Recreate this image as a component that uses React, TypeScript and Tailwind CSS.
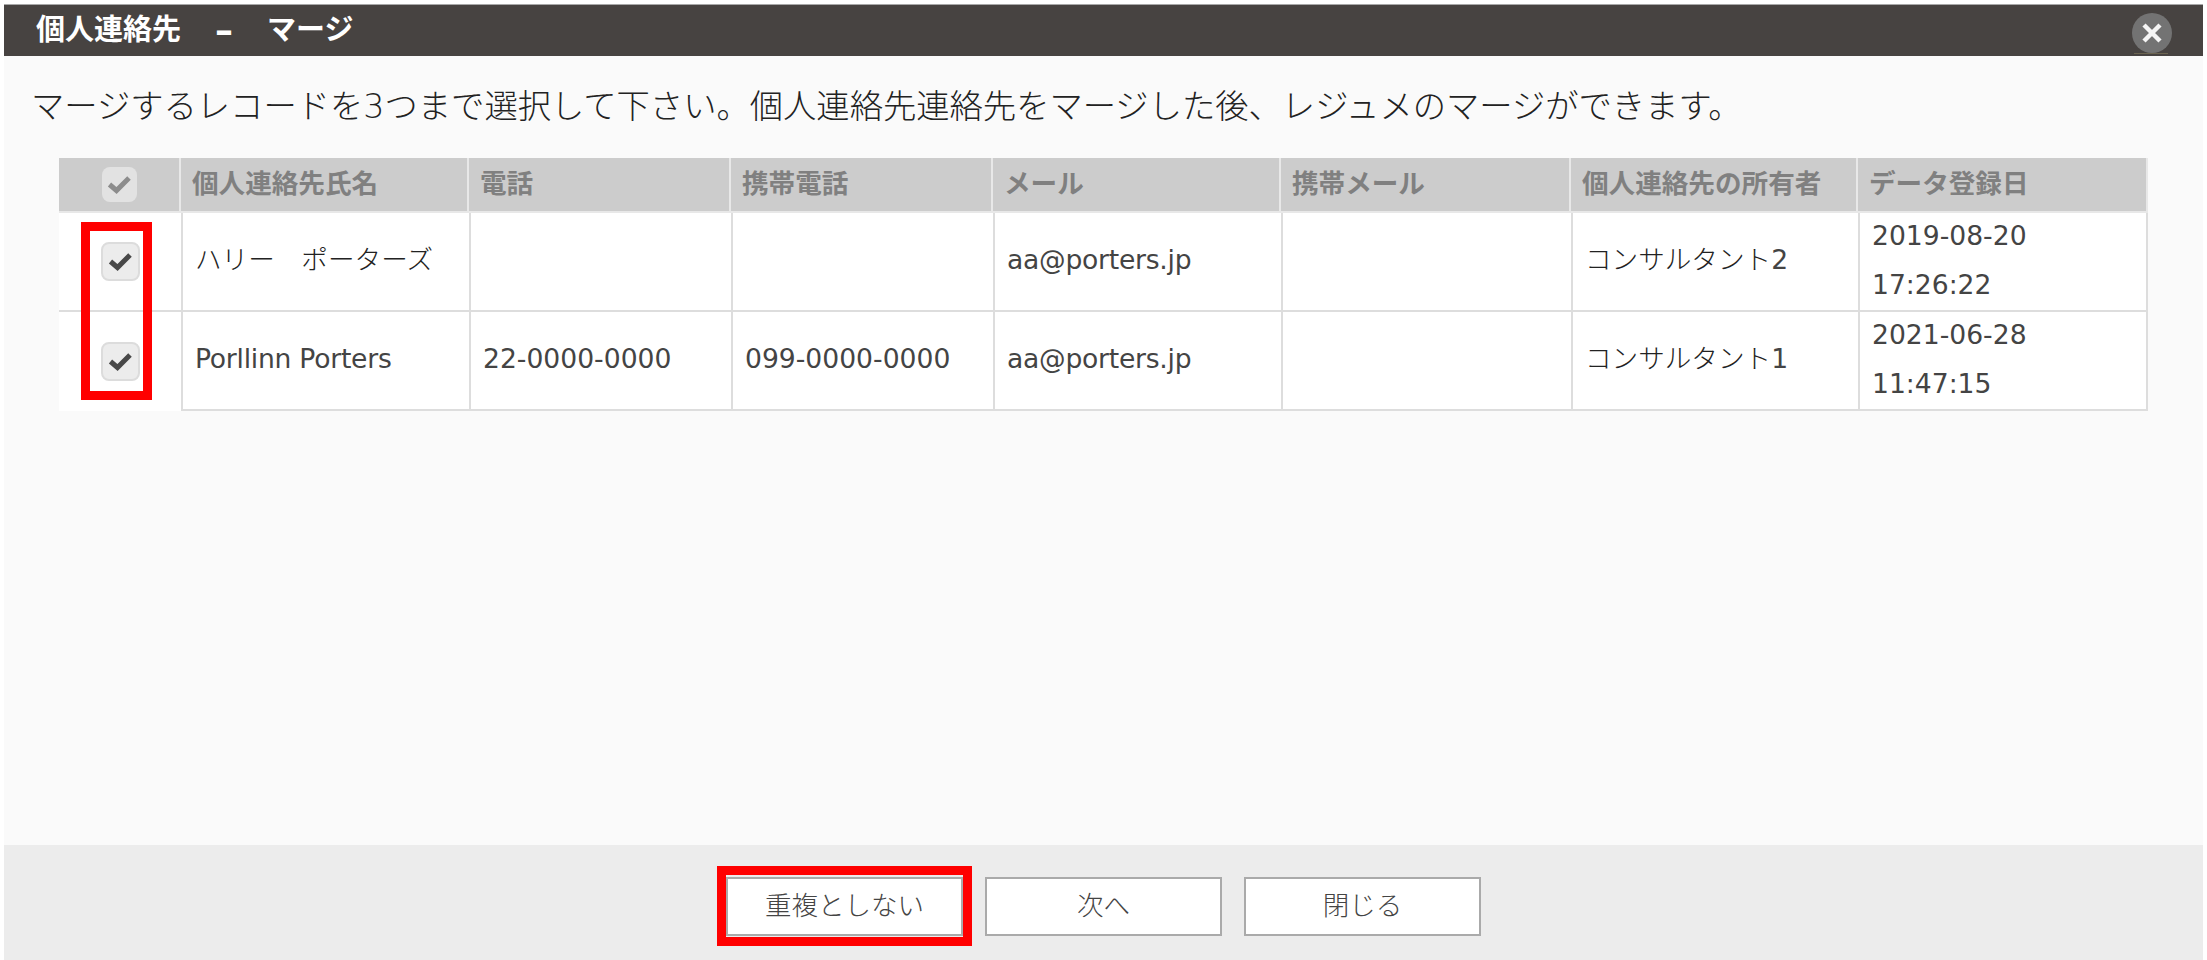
const font = { fontFamily: '"DejaVu Sans", "Noto Sans CJK JP", sans-serif' };

function Check({ header = false }: { header?: boolean }) {
  return (
    <div
      className={
        header
          ? "flex h-[35px] w-[35px] items-center justify-center rounded-lg bg-[#e2e2e2]"
          : "flex h-[39px] w-[39px] items-center justify-center rounded-lg border-2 border-[#dcdcdc] bg-[#ececec]"
      }
    >
      <svg width="25" height="21" viewBox="0 0 25 21" fill="none" className="blur-[0.5px]">
        <path
          d="M2.5 10.5 L9.5 16.5 L22 4"
          stroke={header ? "#8c8c8c" : "#484848"}
          strokeWidth="5"
        />
      </svg>
    </div>
  );
}

const heads = [
  "個人連絡先氏名",
  "電話",
  "携帯電話",
  "メール",
  "携帯メール",
  "個人連絡先の所有者",
  "データ登録日",
];

const L = ({ children }: { children: string }) => (
  <span className="font-normal text-[#444444]">{children}</span>
);
const N = ({ children }: { children: string }) => (
  <span className="font-normal tracking-[-0.25px] text-[#444444]">{children}</span>
);

const rows = [
  ["ハリー　ポーターズ", null, null, <N>aa@porters.jp</N>, null, <>コンサルタント<L>2</L></>, ["2019-08-20", "17:26:22"]],
  [<N>Porllinn Porters</N>, <L>22-0000-0000</L>, <L>099-0000-0000</L>, <N>aa@porters.jp</N>, null, <>コンサルタント<L>1</L></>, ["2021-06-28", "11:47:15"]],
] as const;

function Btn({ children }: { children: string }) {
  return (
    <button className="h-[59px] w-[237px] border-2 border-[#aaaaaa] bg-white text-[26.5px] font-light text-[#444444]">
      {children}
    </button>
  );
}

export default function App() {
  return (
    <div className="h-[960px] bg-white px-[4px] pt-[4px]" style={font}>
      <div className="flex h-full flex-col bg-[#fafafa]">
        <div className="flex h-[52px] items-center justify-between border-t border-[#a8a8a8] bg-[#474341] pl-[32px] pr-[31px]">
          <div className="flex items-center gap-[34px] text-[29px] font-bold leading-none text-white">
            <span>個人連絡先</span>
            <span className="w-[18px] text-center text-[36px]">–</span>
            <span>マージ</span>
          </div>
          <div className="relative mt-[4px] flex h-[40px] w-[40px] items-center justify-center rounded-full bg-[#737373]">
            <svg width="22" height="22" viewBox="0 0 22 22" fill="none" className="blur-[0.5px]">
              <path d="M3 3 L19 19 M19 3 L3 19" stroke="#f5f5f5" strokeWidth="4.5" />
            </svg>
            <div className="absolute -bottom-[1px] left-[2px] right-[4px] h-px bg-[#6b6450]" />
          </div>
        </div>

        <div className="flex-1 pl-[27px] pt-[27px]">
          <div className="text-[33.3px] font-light leading-[48px] text-[#222222]">
            マージするレコードを3つまで選択して下さい。個人連絡先連絡先をマージした後、レジュメのマージができます。
          </div>
          <div className="relative ml-[28px] mt-[27px] w-[2089px]">
            <div className="grid grid-cols-[122px_288px_262px_262px_288px_290px_287px_290px] text-[26.6px] font-light text-[#222222]">
              <div className="flex h-[55px] items-center justify-center border-r-2 border-b-2 border-[#e8e8e8] bg-[#cccccc]">
                <Check header />
              </div>
              {heads.map((h) => (
                <div
                  key={h}
                  className="flex h-[55px] items-center border-r-2 border-b-2 border-[#e8e8e8] bg-[#cccccc] pb-[2px] pl-[11px] font-bold text-[#808080]"
                >
                  {h}
                </div>
              ))}
              {rows.map((r, i) => (
                <div key={i} className="contents">
                  <div
                    className={
                      i === 0
                        ? "flex h-[99px] items-center justify-center border-b-2 border-[#dddddd] bg-white"
                        : "flex h-[99px] items-center justify-center bg-white"
                    }
                  >
                    <Check />
                  </div>
                  {r.map((c, j) => (
                    <div
                      key={j}
                      className="flex h-[99px] flex-col justify-center border-b-2 border-l-2 border-[#dddddd] bg-white pb-[3px] pl-[12px] last:border-r-2"
                    >
                      {Array.isArray(c) ? (
                        <>
                          <div className="font-normal leading-[49px] text-[#444444]">{c[0]}</div>
                          <div className="font-normal leading-[49px] text-[#444444]">{c[1]}</div>
                        </>
                      ) : (
                        <div>{c}</div>
                      )}
                    </div>
                  ))}
                </div>
              ))}
            </div>
            <div className="absolute left-[22px] top-[64px] h-[178px] w-[71px] border-[9px] border-[#ff0000]" />
          </div>
        </div>

        <div className="flex h-[115px] items-center justify-center gap-[22px] bg-[#ececec] pt-[7px]">
          <div className="relative">
            <Btn>重複としない</Btn>
            <div className="absolute -inset-x-[9px] -bottom-[10px] -top-[11px] border-[9px] border-[#ff0000]" />
          </div>
          <Btn>次へ</Btn>
          <Btn>閉じる</Btn>
        </div>
      </div>
    </div>
  );
}
